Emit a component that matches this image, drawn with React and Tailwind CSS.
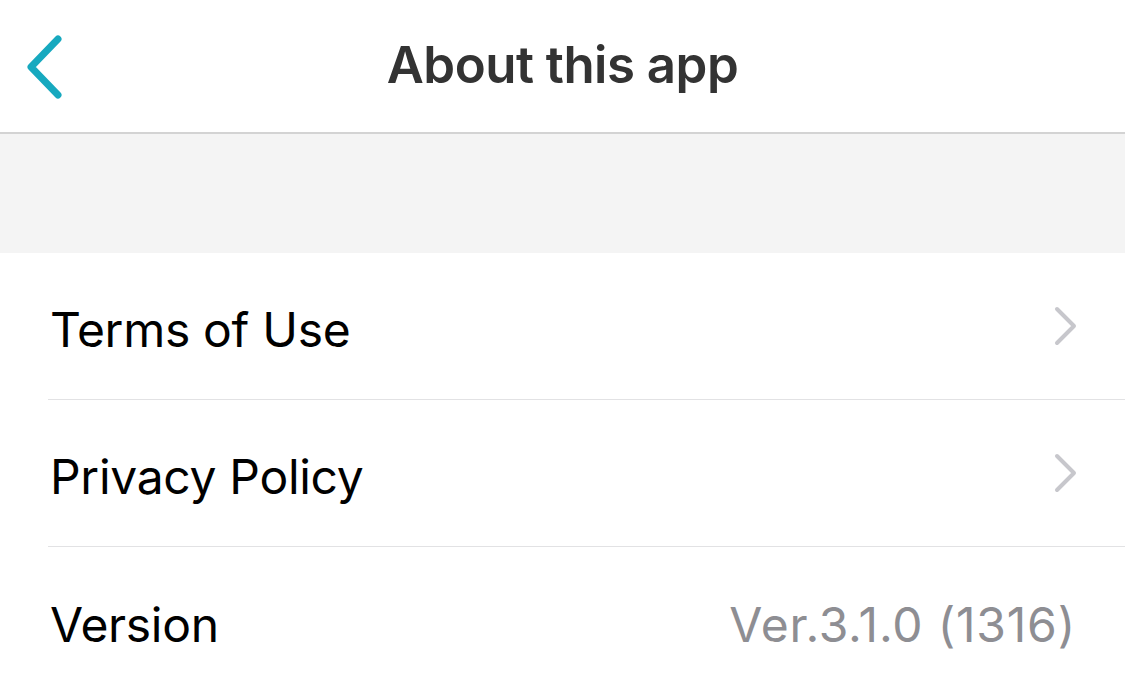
const BackIcon = () => (
  <svg width="40" height="66" viewBox="0 0 40 66" fill="none">
    <path
      d="M33 5 L6 33 L33 61"
      stroke="#17a9bf"
      strokeWidth="7"
      strokeLinecap="round"
      strokeLinejoin="round"
    />
  </svg>
);

const Row = ({ label, value, chevron, last }) => (
  <div className="pl-[48px]">
    <div
      className={
        'flex items-center h-[147px] pr-[46px] ' +
        (last ? '' : 'border-b border-[#e2e2e4]')
      }
    >
      <span className="pl-[2px] pt-[8px] text-[48px] text-black tracking-[-0.3px]">{label}</span>
      <div className="ml-auto flex items-center">
        {value && (
          <span className="pt-[8px] pr-[3px] text-[48px] text-[#8e8e93] tracking-[0.8px]">
            {value}
          </span>
        )}
        {chevron && (
          <svg width="26" height="40" viewBox="0 0 26 40" fill="none">
            <path
              d="M4 3 L21 20 L4 37"
              stroke="#c7c7cc"
              strokeWidth="4"
              strokeLinecap="round"
              strokeLinejoin="round"
            />
          </svg>
        )}
      </div>
    </div>
  </div>
);

export default function App() {
  return (
    <div className="w-[1125px] h-[691px] overflow-hidden bg-white font-['Inter',sans-serif]">
      <div className="relative h-[134px] flex items-center justify-center border-b-2 border-[#d3d3d3]">
        <button className="absolute left-[25px] top-[34px]">
          <BackIcon />
        </button>
        <h1 className="text-[51px] font-semibold text-[#333333] tracking-[-0.5px] -mt-[2px]">
          About this app
        </h1>
      </div>
      <div className="h-[119px] bg-[#f4f4f4]" />
      <Row label="Terms of Use" chevron />
      <Row label="Privacy Policy" chevron />
      <Row label="Version" value="Ver.3.1.0 (1316)" last />
    </div>
  );
}
